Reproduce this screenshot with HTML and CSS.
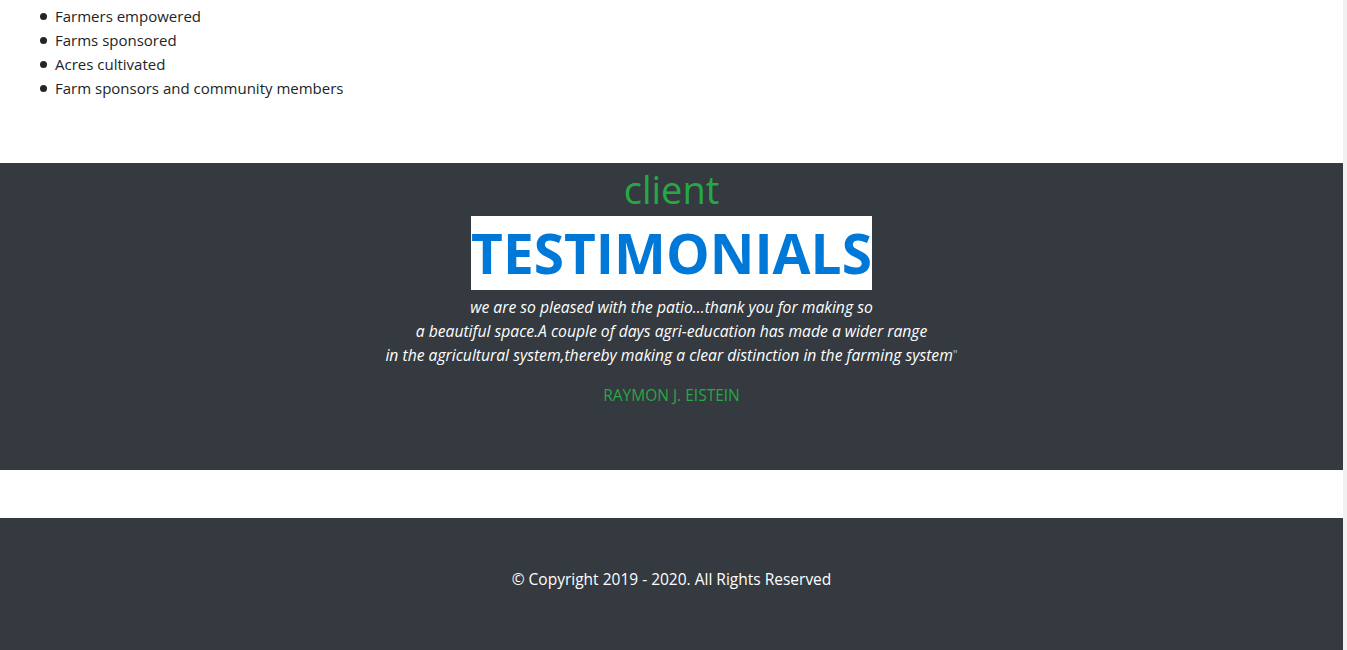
FILE: index.html
```html
<!DOCTYPE html>
<html lang="en">
<head>
<meta charset="utf-8">
<title>Testimonials</title>
<link rel="stylesheet" href="styles.css">
</head>
<body>
<div class="page">
  <section class="stats">
    <ul class="stats-list">
      <li>Farmers empowered</li>
      <li>Farms sponsored</li>
      <li>Acres cultivated</li>
      <li>Farm sponsors and community members</li>
    </ul>
  </section>
  <section class="testimonials">
    <h2 class="kicker">client</h2>
    <h1 class="title"><span class="title-box">TESTIMONIALS</span></h1>
    <p class="quote">we are so pleased with the patio...thank you for making so<br>a beautiful space.A couple of days agri-education has made a wider range<br>in the agricultural system,thereby making a clear distinction in the farming system<span class="quote-mark">"</span></p>
    <p class="author">RAYMON J. EISTEIN</p>
  </section>
  <div class="spacer"></div>
  <footer class="footer">
    <p class="copyright">© Copyright 2019 - 2020. All Rights Reserved</p>
  </footer>
</div>
</body>
</html>
```
FILE: styles.css
```css
html {
  background: #f1f1f1;
}
body {
  margin: 0;
  font-family: "Open Sans", "Noto Sans", "Liberation Sans", sans-serif;
  font-size: 16px;
  line-height: 24px;
  color: #212529;
}
.page {
  width: 1343px;
  background: #fff;
  overflow: hidden;
}
.stats {
  padding: 4px 15px 0;
  margin-bottom: 63px;
}
.stats-list {
  margin: 0;
  padding-left: 40px;
  font-size: 15px;
  list-style: none;
}
.stats-list li {
  height: 24px;
}
.stats-list li::before {
  content: "";
  display: inline-block;
  width: 7px;
  height: 7px;
  margin: 0 8px 0 -15px;
  border-radius: 50%;
  background: #212529;
  vertical-align: 2px;
}
.testimonials {
  background: #343a40;
  height: 307px;
  display: flex;
  flex-direction: column;
  align-items: center;
  text-align: center;
}
.kicker {
  margin: 0;
  font-size: 38px;
  line-height: 53px;
  font-weight: 400;
  color: #28a745;
}
.title {
  margin: 0;
  font-size: 55px;
  line-height: 74px;
  height: 74px;
  font-weight: 700;
  color: #0078d7;
}
.title-box {
  display: inline-block;
  background: #fff;
  height: 74px;
}
.quote {
  margin: 5px 0 0;
  font-size: 15.7px;
  font-style: italic;
  color: #fff;
}
.quote-mark {
  color: #9ecbf0;
  font-style: normal;
  font-size: 12px;
  vertical-align: top;
}
.author {
  margin: 16px 0 0;
  font-size: 15.5px;
  color: #28a745;
}
.spacer {
  height: 48px;
}
.footer {
  background: #343a40;
  padding: 49px 0 60px;
  text-align: center;
}
.copyright {
  margin: 0;
  font-size: 15.5px;
  color: #fff;
}
```
